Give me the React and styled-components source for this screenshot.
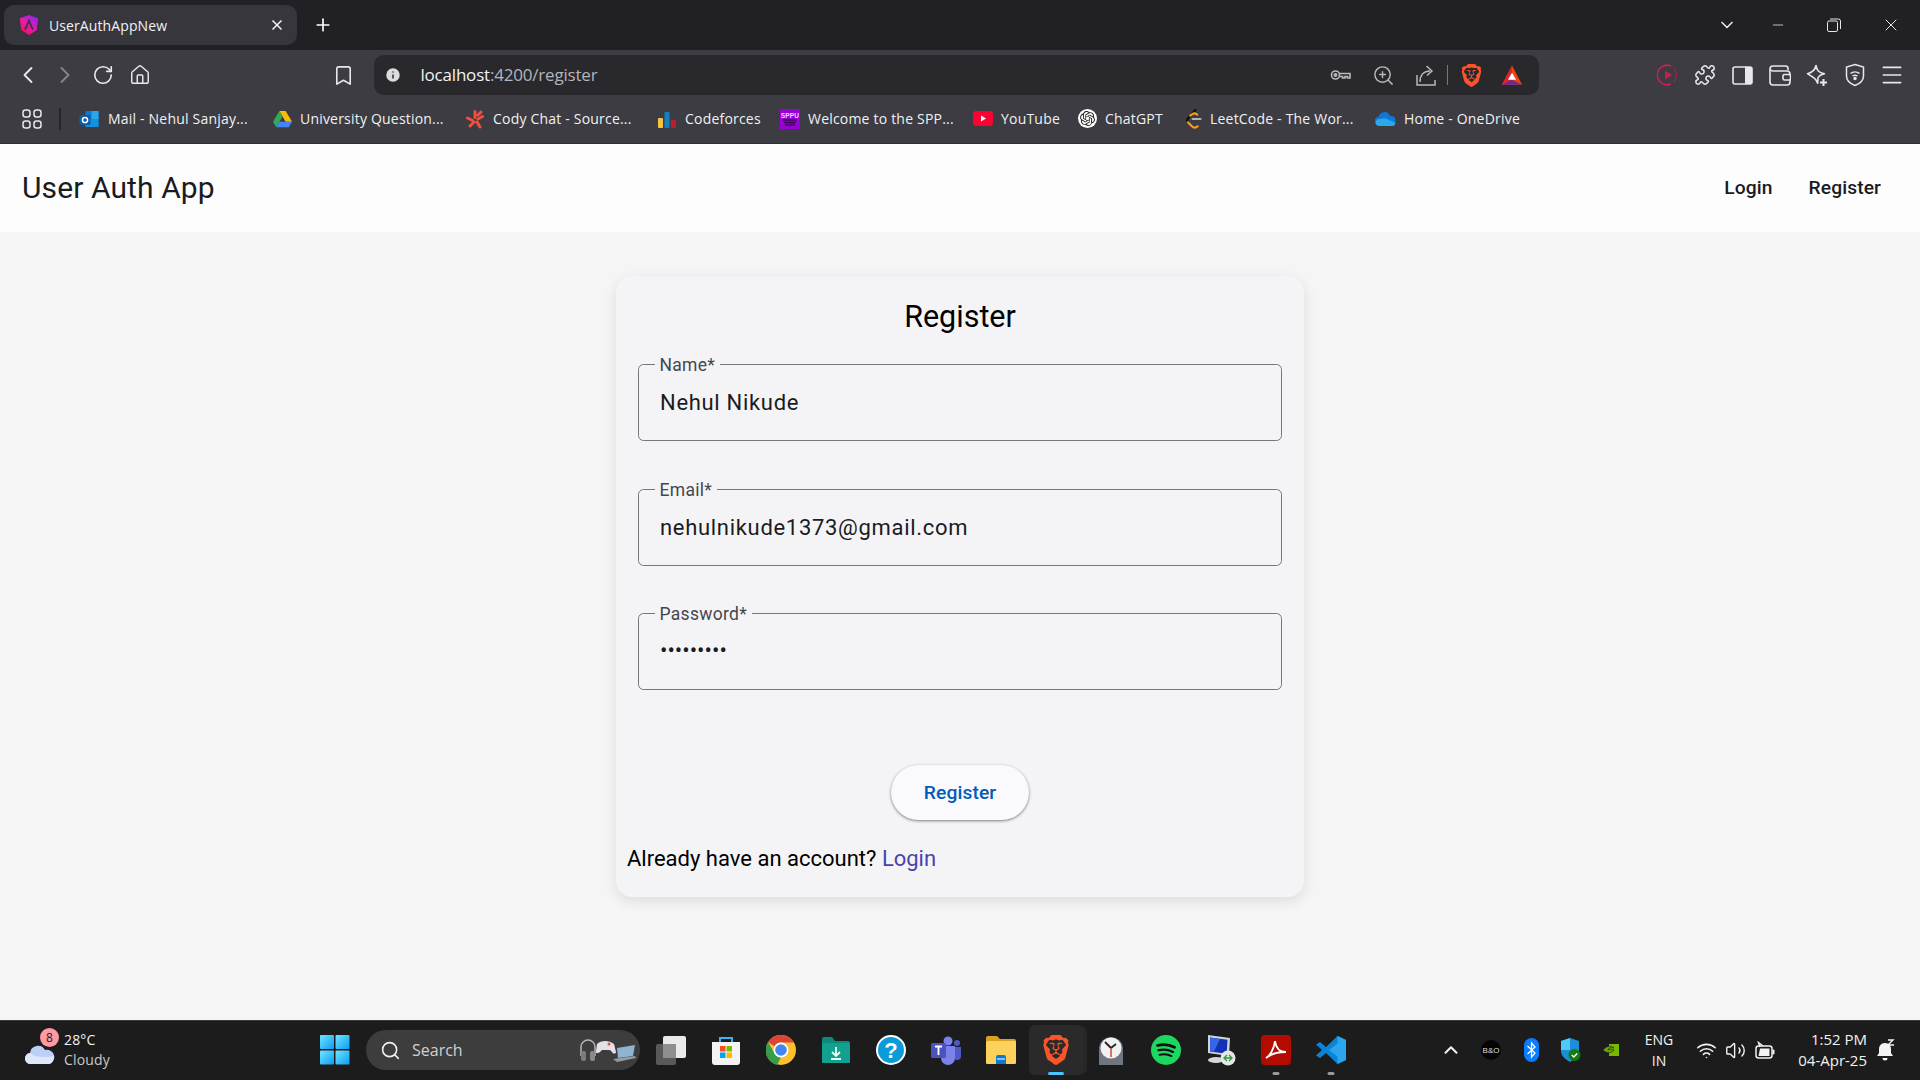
import React from "react";
import styled, { createGlobalStyle } from "styled-components";
import {
  ChevronLeft, ChevronRight, ChevronDown, ChevronUp, RotateCw, House, Bookmark, Info,
  ZoomIn, Puzzle, Menu, Wifi, Volume2, Minus, X, Search, Plus,
} from "lucide-react";
import { SiBrave, SiOpenai } from "react-icons/si";

const GlobalStyle = createGlobalStyle`
  html, body { margin: 0; padding: 0; height: 100%; background: #f5f5f5; }
  * { box-sizing: border-box; }
  body { font-family: Roboto, "Liberation Sans", sans-serif; overflow: hidden; }
`;

const Screen = styled.div`
  width: 1920px;
  height: 1080px;
  display: flex;
  flex-direction: column;
  overflow: hidden;
`;

/* browser chrome */
const TabStrip = styled.div`
  height: 50px;
  background: #202025;
  display: flex;
  align-items: center;
  padding-left: 4px;
  color: #fff;
  font-family: "Open Sans", sans-serif;
`;
const Tab = styled.div`
  width: 293px;
  height: 40px;
  background: #36363c;
  border-radius: 10px;
  display: flex;
  align-items: center;
  padding: 0 12px 0 14px;
  gap: 9px;
  font-size: 14px;
  letter-spacing: 0.1px;
  color: #f1f1f3;
`;
const TabTitle = styled.span`
  flex: 1;
`;
const NewTab = styled.div`
  margin-left: 16px;
  display: flex;
`;
const WindowControls = styled.div`
  margin-left: auto;
  display: flex;
  align-items: center;
`;
const WinBtn = styled.div`
  width: ${(p) => p.$w || 56}px;
  display: flex;
  justify-content: center;
  color: #e6e6e8;
`;
const Toolbar = styled.div`
  height: 45px;
  background: #3c3c42;
  display: flex;
  align-items: flex-start;
  padding: 5px 0 0 9px;
  color: #e8e8ea;
`;
const ToolBtn = styled.div`
  width: ${(p) => p.$w || 37.5}px;
  height: 40px;
  flex: none;
  display: flex;
  align-items: center;
  justify-content: center;
  margin-left: ${(p) => p.$ml || 0}px;
  color: ${(p) => p.$color || "#e8e8ea"};
`;
const UrlBar = styled.div`
  width: 1165px;
  height: 40px;
  margin-left: 11px;
  background: #28282d;
  border-radius: 10px;
  display: flex;
  align-items: center;
  flex: none;
  padding-left: 10px;
`;
const UrlText = styled.span`
  margin: -2px 0 0 19px;
  font-family: "Open Sans", sans-serif;
  font-size: 17px;
  letter-spacing: -0.2px;
  color: #b5b5ba;
  b { font-weight: 400; color: #f2f2f4; }
`;
const UrlActions = styled.div`
  margin-left: auto;
  display: flex;
  align-items: center;
  padding-right: 10px;
`;
const UrlAction = styled.div`
  width: ${(p) => p.$w || 43}px;
  display: flex;
  justify-content: center;
  color: #b9b9bd;
`;
const UrlDivider = styled.div`
  width: 1px;
  height: 20px;
  background: #77777c;
`;
const BookmarksBar = styled.div`
  height: 49px;
  background: #3c3c42;
  display: flex;
  align-items: center;
  padding: 0 0 1px 22px;
  border-bottom: 1px solid #303035;
  font-family: "Open Sans", sans-serif;
  color: #f1f1f3;
`;
const BarDivider = styled.div`
  width: 2px;
  height: 22px;
  background: #26262a;
  margin: 0 18px 0 17px;
`;
const BookmarkItem = styled.div`
  width: ${(p) => p.$w}px;
  flex: none;
  display: flex;
  align-items: center;
  gap: 8px;
  font-size: 14px;
  letter-spacing: 0.2px;
  white-space: nowrap;
  svg { flex: none; }
`;
const GptDisc = styled.span`
  display: flex;
  background: #fff;
  border-radius: 50%;
  padding: 2px;
`;

/* app */
const Page = styled.div`
  flex: 1;
  background: #f5f5f5;
  display: flex;
  flex-direction: column;
  align-items: center;
`;
const NavBar = styled.header`
  width: 100%;
  height: 88px;
  background: #fdfdfe;
  display: flex;
  align-items: center;
  padding: 0 22px 2px;
`;
const Brand = styled.div`
  font-size: 30px;
  color: #1a1b1f;
  letter-spacing: 0.1px;
`;
const NavLinks = styled.nav`
  margin-left: auto;
  display: flex;
  gap: 36px;
  padding-right: 17px;
`;
const NavLink = styled.a`
  font-size: 19.25px;
  font-weight: 500;
  letter-spacing: 0.1px;
  color: #1a1b1f;
`;
const Card = styled.main`
  width: 688px;
  margin-top: 44px;
  padding: 19px 22px 23px;
  background: #f4f4f6;
  border-radius: 16px;
  box-shadow: 0 4px 14px rgba(0, 0, 0, 0.1);
`;
const Title = styled.h2`
  margin: 0 0 25px;
  font-size: 30.5px;
  line-height: 44px;
  font-weight: 400;
  text-align: center;
  color: #000;
`;
const Fields = styled.div`
  display: flex;
  flex-direction: column;
  gap: 47.5px;
  margin-bottom: 75px;
`;
const FieldBox = styled.div`
  position: relative;
  height: 77px;
  border: 1.4px solid #74777f;
  border-radius: 5.5px;
  display: flex;
  align-items: center;
  padding: 0 21px;
  font-size: 22px;
  letter-spacing: 0.69px;
  color: #1a1b1f;
`;
const FieldLabel = styled.label`
  position: absolute;
  left: 15.5px;
  top: -10px;
  padding: 0 5px;
  background: #f4f4f6;
  font-size: 17.5px;
  line-height: 20px;
  letter-spacing: 0.3px;
  color: #44474e;
`;
const Dots = styled.span`
  font-size: 22px;
  letter-spacing: 0;
  line-height: 1;
  margin-top: -2px;
`;
const ButtonRow = styled.div`
  display: flex;
  justify-content: center;
`;
const RegisterButton = styled.button`
  width: 138px;
  height: 55px;
  border: none;
  border-radius: 27.5px;
  background: #faf9fd;
  color: #005cbb;
  font-family: inherit;
  font-size: 19.25px;
  font-weight: 500;
  letter-spacing: 0.1px;
  box-shadow: 0 1px 3px 1px rgba(0, 0, 0, 0.15), 0 1px 2px rgba(0, 0, 0, 0.3);
`;
const FooterText = styled.p`
  margin: 24px 0 0 -11px;
  font-size: 22px;
  line-height: 30px;
  color: #000;
  a { color: #4a41b0; }
`;

/* taskbar */
const Taskbar = styled.footer`
  height: 60px;
  flex: none;
  background: #1c1c1c;
  border-top: 1px solid #3a3a3a;
  display: flex;
  align-items: center;
  padding-bottom: 1px;
  color: #f2f2f2;
  font-family: "Open Sans", sans-serif;
`;
const Weather = styled.div`
  width: 320px;
  flex: none;
  display: flex;
  align-items: center;
  gap: 9px;
  padding-left: 25px;
`;
const WeatherIcon = styled.div`
  position: relative;
  width: 30px;
  height: 30px;
  display: flex;
  align-items: flex-end;
`;
const Badge = styled.span`
  position: absolute;
  top: -7px;
  right: -4px;
  width: 19px;
  height: 19px;
  border-radius: 50%;
  background: #ff99a4;
  color: #1c1c1c;
  font-size: 12px;
  line-height: 19px;
  text-align: center;
`;
const WeatherText = styled.div`
  font-size: 14px;
  line-height: 20px;
  letter-spacing: 0.15px;
  span { display: block; color: #c8c8c8; }
`;
const SearchPill = styled.div`
  width: 274px;
  height: 40px;
  margin-left: 16px;
  border-radius: 20px;
  background: #3d3d3d;
  display: flex;
  align-items: center;
  gap: 11px;
  padding-left: 14px;
  font-size: 16px;
  color: #d0d0d0;
  flex: none;
`;
const PillArt = styled.div`
  margin-left: auto;
  margin-right: -1px;
  display: flex;
`;
const TaskIcon = styled.div`
  position: relative;
  width: 55px;
  height: 50px;
  flex: none;
  display: flex;
  align-items: center;
  justify-content: center;
  border-radius: 6px;
  background: ${(p) => (p.$active ? "#2a2a2a" : "transparent")};
  box-shadow: ${(p) => (p.$active ? "4px 0 0 -1px #262626" : "none")};
  &::after {
    content: "";
    display: ${(p) => (p.$dot ? "block" : "none")};
    position: absolute;
    bottom: 0;
    left: 50%;
    transform: translateX(-50%);
    width: ${(p) => (p.$active ? 16 : 7)}px;
    height: 3px;
    border-radius: 2px;
    background: ${(p) => (p.$active ? "#4cc2ff" : "#9a9a9a")};
  }
`;
const TaskIcons = styled.div`
  display: flex;
  margin-left: 3.5px;
`;
const Tray = styled.div`
  display: flex;
  align-items: center;
  margin-left: 72.5px;
`;
const TrayIcon = styled.div`
  width: ${(p) => p.$w || 40}px;
  margin-left: ${(p) => p.$ml || 0}px;
  flex: none;
  display: flex;
  justify-content: center;
`;
const Lang = styled.div`
  width: 50px;
  margin-left: 3px;
  text-align: center;
  font-size: 14px;
  line-height: 21px;
`;
const Clock = styled.div`
  width: 80px;
  margin-left: 5px;
  text-align: right;
  font-size: 15px;
  line-height: 21px;
  white-space: nowrap;
`;

/* drawn logos */
const AngularIcon = () => (
  <svg width="22" height="24" viewBox="0 0 24 24">
    <defs>
      <linearGradient id="ang" x1="0" y1="1" x2="0.8" y2="0">
        <stop offset="0" stopColor="#f00a3c" />
        <stop offset="0.5" stopColor="#ec1aa8" />
        <stop offset="1" stopColor="#8b24f0" />
      </linearGradient>
    </defs>
    <path fill="url(#ang)" d="M9.9 14.6h4.2L12 9.6zM12 1 2 4.5l1.5 13L12 23l8.5-5.5 1.5-13zm3.3 16.2-1-2.1H9.700l-1 2.100H6.600L12 5l5.400 12.200z" />
  </svg>
);
const SideBarIcon = () => (
  <svg width="21" height="21" viewBox="0 0 21 21">
    <rect x="1" y="2" width="19" height="17" rx="2" fill="none" stroke="#e8e8ea" strokeWidth="1.6" />
    <rect x="13" y="2" width="7" height="17" fill="#e8e8ea" />
  </svg>
);
const KeyIcon = () => (
  <svg width="21" height="14" viewBox="0 0 21 14" fill="none" stroke="#b9b9bd" strokeWidth="1.6">
    <circle cx="5.5" cy="7" r="4" />
    <circle cx="5.5" cy="7" r="1.2" fill="#b9b9bd" />
    <path d="M9.5 5.5H20V10h-2.5V8.5H15V10h-2.5V8.5h-3" />
  </svg>
);
const ShareIcon = () => (
  <svg width="20" height="24" viewBox="0 0 20 24" fill="none" stroke="#b9b9bd" strokeWidth="1.5">
    <path d="M1 12v10h18v-5M4 19c0-7 4-11 10-11M10.5 3 16 8l-5 4.5" />
  </svg>
);
const BatIcon = () => (
  <svg width="22" height="23" viewBox="0 0 24 24">
    <path d="M12 1 1 22h22z" fill="#f1440f" />
    <path d="M12 1 1 22h11z" fill="#d8232e" />
    <path d="M1 22l11-5.500L23 22z" fill="#662d91" />
    <path d="m12 9 4.400 7.500H7.600z" fill="#fff" />
  </svg>
);
const PlayCircle = () => (
  <svg width="22" height="22" viewBox="0 0 22 22" fill="none">
    <path d="M14 2A9.800 9.800 0 1 0 14 20" stroke="#d3204f" strokeWidth="1.500" />
    <path d="M17 4.500A9.800 9.800 0 0 1 17 17.500" stroke="#8f2a47" strokeWidth="1.500" />
    <path d="m8 6.500 7.500 4.500L8 15.500z" fill="#c52049" />
  </svg>
);
const WalletIcon = () => (
  <svg width="22" height="21" viewBox="0 0 22 21" fill="none" stroke="#e8e8ea" strokeWidth="1.600">
    <path d="M19 5V3.500A2.500 2.500 0 0 0 16.500 1H4a3 3 0 0 0-3 3v13a3 3 0 0 0 3 3h14a3 3 0 0 0 3-3v-2" />
    <path d="M1.500 4.500C2 6 3 6 4 6h14a3 3 0 0 1 3 3v1" />
    <rect x="14" y="9.500" width="7.500" height="5.500" rx="1.500" />
  </svg>
);
const StarIcon = () => (
  <svg width="23" height="23" viewBox="0 0 23 23" fill="none" stroke="#e8e8ea" strokeWidth="1.600">
    <path d="M10 1.500c.8 5 2.500 7 8.500 8.200-4 .9-5.600 2-6.500 4.300l-.3 5.300c-1-1.700-1-2.500-1.700-3.200C8.900 14 6.500 13 1.500 9.700 6.500 8.500 9 6.500 10 1.500z" strokeLinejoin="round" />
    <path d="M17.500 15v7M14 18.500h7" strokeWidth="2" />
  </svg>
);
const ShieldWifi = () => (
  <svg width="20" height="24" viewBox="0 0 20 24" fill="none" stroke="#e8e8ea" strokeWidth="1.500">
    <path d="M10 1.500 18.500 4v9c0 5-4.500 8-8.500 9.500C6 21 1.500 18 1.500 13V4z" />
    <path d="M5.500 10.500c2.600-2 6.400-2 9 0M7.500 13c1.500-1 3.500-1 5 0" />
    <circle cx="10" cy="15.500" r="1" fill="#e8e8ea" />
  </svg>
);
const AppsGrid = () => (
  <svg width="20" height="20" viewBox="0 0 20 20" fill="none" stroke="#e8e8ea" strokeWidth="1.500">
    <rect x="1" y="1" width="7" height="7" rx="2.500" />
    <rect x="12" y="1" width="7" height="7" rx="2.500" />
    <rect x="1" y="12" width="7" height="7" rx="2.500" />
    <rect x="12" y="12" width="7" height="7" rx="2.500" />
  </svg>
);
const OutlookIcon = () => (
  <svg width="21" height="20" viewBox="0 0 20 20">
    <rect x="6" y="2" width="13" height="16" rx="1" fill="#0f78d4" />
    <rect x="12" y="2" width="7" height="8" fill="#28a8ea" />
    <path d="M6 10h13v8H6z" fill="#1490df" />
    <rect x="0" y="6" width="11" height="10" rx="1" fill="#0a5ea8" />
    <circle cx="5.500" cy="11" r="2.600" fill="none" stroke="#fff" strokeWidth="1.500" />
  </svg>
);
const DriveIcon = () => (
  <svg width="19" height="18" viewBox="0 0 24 22">
    <path d="M8 1h8l8 13.500h-8z" fill="#fbbc04" />
    <path d="M8 1 0 14.500 4 21.500 12 8z" fill="#34a853" />
    <path d="M4 21.500h16l4-7H8z" fill="#4285f4" />
  </svg>
);
const CodyIcon = () => (
  <svg width="20" height="20" viewBox="0 0 20 20" stroke="#f34e3f" strokeWidth="3" strokeLinecap="round">
    <path d="M10 2.500v6M2.500 9l5 2.500M5 17l4-4M12 13l3 5M17.500 7.500 13 10M16 3l-3 3" />
  </svg>
);
const BarsIcon = () => (
  <svg width="20" height="20" viewBox="0 0 20 20">
    <rect x="1" y="9" width="5" height="10" rx="1" fill="#f5c343" />
    <rect x="7.500" y="3" width="5" height="16" rx="1" fill="#1480c4" />
    <rect x="14" y="11" width="5" height="8" rx="1" fill="#b5202a" />
  </svg>
);
const SppuIcon = () => (
  <svg width="20" height="20" viewBox="0 0 20 20">
    <rect width="20" height="20" fill="#9a00d8" />
    <text x="10" y="8.500" textAnchor="middle" fontFamily="Liberation Sans" fontWeight="700" fontSize="6.500" fill="#f3d8ff">SPPU</text>
    <path d="M3 11h14M4 13.500h12M5 16h10" stroke="#3a0054" strokeWidth="1.500" />
  </svg>
);
const YouTubeIcon = () => (
  <svg width="20" height="15" viewBox="0 0 20 15">
    <rect width="20" height="15" rx="3.500" fill="#ff0033" />
    <path d="m8 4.500 5 3-5 3z" fill="#fff" />
  </svg>
);
const LeetCodeIcon = () => (
  <svg width="17" height="22" viewBox="0 0 18 22" fill="none" strokeWidth="2.200" strokeLinecap="round">
    <path d="M11 1.500 3 10.500" stroke="#0d0d0d" />
    <path d="M3 10.500c-1 1.500-1 3 0 4" stroke="#0d0d0d" />
    <path d="M3 14.500l4 4c2 2 4.500 2 6.500.2" stroke="#f89f1b" />
    <path d="M5.500 7.500 7.500 6c2-1.500 4-1 5.500.5" stroke="#f89f1b" />
    <path d="M8 11h8.500" stroke="#b3b3b3" />
  </svg>
);
const OneDriveIcon = () => (
  <svg width="21" height="14" viewBox="0 0 21 14">
    <path d="M4 13a4 4 0 0 1-.5-8A6 6 0 0 1 15 4a4.500 4.500 0 0 1 2 9z" fill="#0f78d4" />
    <path d="M4 14a3.500 3.500 0 0 1-1-6.800l7-1 10.500 4.500A3.500 3.500 0 0 1 17.500 14z" fill="#29a8ea" />
  </svg>
);
const CloudIcon = () => (
  <svg width="30" height="24" viewBox="0 0 30 24">
    <path d="M6 23a5.500 5.500 0 0 1-1-11 8 8 0 0 1 15-3 6.500 6.500 0 0 1 4 14z" fill="#bcd0f5" />
    <path d="M6 23a5.500 5.500 0 0 1-1-11c4 4 14 5 24 3 0 4-2 8-5 8z" fill="#dfe8fb" />
  </svg>
);
const WindowsLogo = () => (
  <svg width="30" height="30" viewBox="0 0 30 30">
    <defs>
      <linearGradient id="winA" x1="0" y1="0" x2="1" y2="1">
        <stop offset="0" stopColor="#6fe6ff" />
        <stop offset="1" stopColor="#0d9cf5" />
      </linearGradient>
    </defs>
    <rect width="14" height="14" rx="1" fill="url(#winA)" />
    <rect x="15.500" width="14" height="14" rx="1" fill="url(#winA)" />
    <rect y="15.500" width="14" height="14" rx="1" fill="url(#winA)" />
    <rect x="15.500" y="15.500" width="14" height="14" rx="1" fill="url(#winA)" />
  </svg>
);
const SearchArt = () => (
  <svg width="66" height="28" viewBox="0 0 60 28">
    <path d="M3 20V11a7 7 0 0 1 14 0v9" fill="none" stroke="#b5b5b5" strokeWidth="1.500" />
    <rect x="3" y="15" width="5" height="10" rx="2" fill="#7c7c7c" />
    <rect x="12" y="15" width="5" height="10" rx="2" fill="#8a8a8a" />
    <path d="M19 8c4-4 12-4 17 0l2 8c0 2-3 2-4 0l-2-2h-8l-2 2c-2 2-5 1-4-1z" fill="#e6dfe6" />
    <circle cx="31" cy="8" r="1.500" fill="#d9534f" />
    <path d="M39 12l18-3-2 11-15 2z" fill="#8eb4cf" />
    <path d="M35 23l22-3 1 2-19 4z" fill="#9a9a9a" />
  </svg>
);
const TaskViewIcon = () => (
  <svg width="30" height="30" viewBox="0 0 30 30">
    <rect x="0" y="9" width="20" height="21" rx="2" fill="#595959" />
    <rect x="7" y="1" width="23" height="22" rx="2" fill="#eaeaea" />
    <rect x="7" y="9" width="13" height="14" fill="#8f8f8f" />
  </svg>
);
const StoreIcon = () => (
  <svg width="30" height="30" viewBox="0 0 30 30">
    <path d="M9 7V3h12v4" fill="none" stroke="#35b5f2" strokeWidth="2" />
    <path d="M1 7h28v20a3 3 0 0 1-3 3H4a3 3 0 0 1-3-3z" fill="#f3f3f3" />
    <rect x="9" y="11" width="5.500" height="5.500" fill="#f25022" />
    <rect x="15.500" y="11" width="5.500" height="5.500" fill="#7fba00" />
    <rect x="9" y="17.500" width="5.500" height="5.500" fill="#00a4ef" />
    <rect x="15.500" y="17.500" width="5.500" height="5.500" fill="#ffb900" />
  </svg>
);
const ChromeIcon = () => (
  <svg width="30" height="30" viewBox="0 0 30 30">
    <circle cx="15" cy="15" r="15" fill="#fbc02d" />
    <path d="M15 0a15 15 0 0 1 13 7.500H15a7.500 7.500 0 0 0-6.500 3.750L2 7A15 15 0 0 1 15 0" fill="#db4437" />
    <path d="M2 7l6.500 11.250A7.500 7.500 0 0 0 15 22.500L11 30A15 15 0 0 1 2 7" fill="#3a9b4b" />
    <circle cx="15" cy="15" r="7.500" fill="#fff" />
    <circle cx="15" cy="15" r="5.800" fill="#4285f4" />
  </svg>
);
const DownloadFolder = () => (
  <svg width="28" height="26" viewBox="0 0 28 26">
    <path d="M0 2a2 2 0 0 1 2-2h8l3 4h13a2 2 0 0 1 2 2v18a2 2 0 0 1-2 2H2a2 2 0 0 1-2-2z" fill="#0e8a7d" />
    <rect y="6" width="28" height="20" rx="1.500" fill="#12a08f" />
    <path d="M14 10v8M10 15l4 4 4-4M9 22h10" stroke="#e8fff9" strokeWidth="1.800" fill="none" />
  </svg>
);
const HelpIcon = () => (
  <svg width="30" height="30" viewBox="0 0 30 30">
    <circle cx="15" cy="15" r="14" fill="#0a9bd8" stroke="#fff" strokeWidth="2" />
    <text x="15" y="23" textAnchor="middle" fontFamily="Liberation Sans" fontWeight="700" fontSize="22" fill="#fff">?</text>
  </svg>
);
const TeamsIcon = () => (
  <svg width="30" height="30" viewBox="0 0 30 30">
    <circle cx="17" cy="6" r="4.500" fill="#7b83eb" />
    <circle cx="26" cy="8" r="3" fill="#5059c9" />
    <path d="M22 12h8v9a4 4 0 0 1-8 0z" fill="#5059c9" />
    <path d="M10 11h14v12a6 6 0 0 1-14 0z" fill="#7b83eb" />
    <rect x="0" y="8" width="15" height="15" rx="1.500" fill="#4b53bc" />
    <path d="M4 11.500h7M7.500 11.500V20" stroke="#fff" strokeWidth="1.800" />
  </svg>
);
const FilesIcon = () => (
  <svg width="30" height="28" viewBox="0 0 30 28">
    <path d="M0 2a2 2 0 0 1 2-2h9l3 3h14a2 2 0 0 1 2 2v21a2 2 0 0 1-2 2H2a2 2 0 0 1-2-2z" fill="#d9a11f" />
    <rect y="5" width="30" height="23" rx="1.500" fill="#fcd25c" />
    <path d="M10 21a2 2 0 0 1 2-2h6a2 2 0 0 1 2 2v7H10z" fill="#0f78d4" />
    <rect x="11" y="22" width="8" height="2" fill="#7fc4f5" />
  </svg>
);
const ClockAppIcon = () => (
  <svg width="30" height="30" viewBox="0 0 30 30">
    <path d="M3 30V14a12 12 0 0 1 24 0v16z" fill="#6e7780" />
    <circle cx="15" cy="13" r="10.500" fill="#f1f1f1" />
    <path d="M15 13 9 7M15 13l5-4" stroke="#222" strokeWidth="1.800" />
    <path d="M15 13v9" stroke="#d14b2b" strokeWidth="1.500" />
  </svg>
);
const SpotifyIcon = () => (
  <svg width="30" height="30" viewBox="0 0 30 30">
    <circle cx="15" cy="15" r="15" fill="#1ed760" />
    <g fill="none" stroke="#111" strokeLinecap="round">
      <path d="M6.500 10.500c5.500-1.500 12-1 17 1.800" strokeWidth="2.800" />
      <path d="M7.500 15.200c5-1.200 10-.7 14.500 1.700" strokeWidth="2.300" />
      <path d="M8.500 19.800c4-1 8.500-.6 12 1.300" strokeWidth="1.900" />
    </g>
  </svg>
);
const RemoteIcon = () => (
  <svg width="30" height="32" viewBox="0 0 30 32">
    <path d="M2 1l22 3-1 18L2 19z" fill="#cfd3da" />
    <path d="M4 3.500l17.500 2.300-.8 14L4 17.500z" fill="#1230b4" />
    <path d="M4 3.500 14 5 8 17.800l-4-.3z" fill="#3a64e8" />
    <ellipse cx="10" cy="26" rx="8" ry="3" fill="#d6d6d6" />
    <circle cx="22" cy="24" r="7.500" fill="#e6e6e6" />
    <path d="M18 24h8M21 21l-3 3 3 3M23 21l3 3-3 3" stroke="#2e9e3f" strokeWidth="1.300" fill="none" />
  </svg>
);
const AcrobatIcon = () => (
  <svg width="30" height="30" viewBox="0 0 30 30">
    <rect width="30" height="30" rx="4" fill="#b30b00" />
    <path d="M5 23c4-2 8-9 9-17 1 8 5 11 11 11-6 0-14 1-20 6z" fill="none" stroke="#fff" strokeWidth="1.800" />
  </svg>
);
const VsCodeIcon = () => (
  <svg width="30" height="30" viewBox="0 0 30 30">
    <path d="M21.500 1 30 5v20l-8.500 4L10 18l-6 5-4-2.500L6 15 0 9.500 4 7l6 5z" fill="#0a84d6" />
    <path d="M21.500 1 30 5v20l-8.500 4zM21.500 8.500 13 15l8.500 6.500z" fill="#2ba5ee" fillRule="evenodd" />
  </svg>
);
const BeoIcon = () => (
  <svg width="20" height="20" viewBox="0 0 20 20">
    <circle cx="10" cy="10" r="10" fill="#050505" />
    <text x="10" y="13" textAnchor="middle" fontFamily="Liberation Sans" fontSize="8" fill="#ddd">B&amp;O</text>
  </svg>
);
const BluetoothIcon = () => (
  <svg width="15" height="24" viewBox="0 0 15 24">
    <rect width="15" height="24" rx="7.500" fill="#0a7cff" />
    <path d="M3.500 8 11 15l-3.500 4V5L11 9l-7.500 7" stroke="#fff" strokeWidth="1.300" fill="none" />
  </svg>
);
const DefenderIcon = () => (
  <svg width="20" height="24" viewBox="0 0 20 24">
    <path d="M9 0 18 3v10c0 5-4 8-9 11-5-3-9-6-9-11V3z" fill="#1d8fd8" />
    <path d="M9 0v12H0V3z" fill="#50c8f5" />
    <circle cx="13.500" cy="17" r="6" fill="#107c10" />
    <path d="m10.800 17 2 2 3.400-3.500" stroke="#fff" strokeWidth="1.400" fill="none" />
  </svg>
);
const NvidiaIcon = () => (
  <svg width="16" height="14" viewBox="0 0 16 14">
    <rect x="6" y="1" width="10" height="12" fill="#76b900" />
    <path d="M0 7c3-4 8-5 11-2-3-1-5 0-6 2 2-1 4-1 6 0-2 3-7 4-11 0z" fill="#6aa600" stroke="#1c1c1c" strokeWidth=".6" />
  </svg>
);
const BatteryIcon = () => (
  <svg width="20" height="19" viewBox="0 0 20 19">
    <rect x="1" y="5" width="16" height="12" rx="2.500" fill="none" stroke="#f2f2f2" strokeWidth="1.500" />
    <path d="M3.500 15l1.500-7.500h9.500V15z" fill="#f2f2f2" />
    <rect x="17.500" y="8.500" width="2" height="5" rx="1" fill="#f2f2f2" />
    <path d="M5 6 3.500 1.500 8 5" fill="none" stroke="#f2f2f2" strokeWidth="1.400" />
  </svg>
);
const BellSnooze = () => (
  <svg width="18" height="22" viewBox="0 0 18 22">
    <path d="M8 4c-4 0-6 3-6 6v4l-2 3h16l-2-3v-4c0-3-2-6-6-6z" fill="#f2f2f2" />
    <path d="M5.500 19a2.500 2.500 0 0 0 5 0z" fill="#f2f2f2" />
    <path d="M11 1h5l-5 5h6" stroke="#f2f2f2" strokeWidth="1.400" fill="none" />
  </svg>
);

const GptIcon = () => (
  <GptDisc>
    <SiOpenai size={15} color="#222" />
  </GptDisc>
);

const bookmarks = [
  { w: 194, icon: <OutlookIcon />, label: "Mail - Nehul Sanjay..." },
  { w: 192, icon: <DriveIcon />, label: "University Question..." },
  { w: 192, icon: <CodyIcon />, label: "Cody Chat - Source..." },
  { w: 123, icon: <BarsIcon />, label: "Codeforces" },
  { w: 193, icon: <SppuIcon />, label: "Welcome to the SPP..." },
  { w: 105, icon: <YouTubeIcon />, label: "YouTube" },
  { w: 107, icon: <GptIcon />, label: "ChatGPT" },
  { w: 190, icon: <LeetCodeIcon />, label: "LeetCode - The Wor..." },
  { w: 160, icon: <OneDriveIcon />, label: "Home - OneDrive" },
];

const taskIcons = [
  { el: <TaskViewIcon /> },
  { el: <StoreIcon /> },
  { el: <ChromeIcon /> },
  { el: <DownloadFolder /> },
  { el: <HelpIcon /> },
  { el: <TeamsIcon /> },
  { el: <FilesIcon /> },
  { el: <SiBrave size={30} color="#fb542b" />, active: true, dot: true },
  { el: <ClockAppIcon /> },
  { el: <SpotifyIcon /> },
  { el: <RemoteIcon /> },
  { el: <AcrobatIcon />, dot: true },
  { el: <VsCodeIcon />, dot: true },
];

const Field = ({ label, children }) => (
  <FieldBox>
    <FieldLabel>{label}</FieldLabel>
    {children}
  </FieldBox>
);

export default function App() {
  return (
    <Screen>
      <GlobalStyle />
      <TabStrip>
        <Tab>
          <AngularIcon />
          <TabTitle>UserAuthAppNew</TabTitle>
          <X size={16} strokeWidth={2.5} />
        </Tab>
        <NewTab><Plus size={20} /></NewTab>
        <WindowControls>
          <WinBtn $w={46}><ChevronDown size={20} strokeWidth={2} /></WinBtn>
          <WinBtn><Minus size={16} strokeWidth={1.2} /></WinBtn>
          <WinBtn>
            <svg width="14" height="14" viewBox="0 0 14 14" fill="none" stroke="#e6e6e8">
              <rect x="0.500" y="3" width="10" height="10.500" rx="1.500" />
              <path d="M3 1h8.500a2 2 0 0 1 2 2v8" />
            </svg>
          </WinBtn>
          <WinBtn $w={58}><X size={20} strokeWidth={1.2} /></WinBtn>
        </WindowControls>
      </TabStrip>

      <Toolbar>
        <ToolBtn><ChevronLeft size={28} strokeWidth={1.6} /></ToolBtn>
        <ToolBtn $color="#85858a"><ChevronRight size={28} strokeWidth={1.6} /></ToolBtn>
        <ToolBtn><RotateCw size={22} strokeWidth={1.8} /></ToolBtn>
        <ToolBtn><House size={22} strokeWidth={1.6} /></ToolBtn>
        <ToolBtn $ml={166}><Bookmark size={23} strokeWidth={1.7} /></ToolBtn>
        <UrlBar>
          <Info size={18} fill="#dcdcde" color="#28282d" strokeWidth={2} />
          <UrlText><b>localhost</b>:4200/register</UrlText>
          <UrlActions>
            <UrlAction><KeyIcon /></UrlAction>
            <UrlAction><ZoomIn size={23} strokeWidth={1.5} /></UrlAction>
            <UrlAction $w={42}><ShareIcon /></UrlAction>
            <UrlDivider />
            <UrlAction $w={48}><SiBrave size={23} color="#fb542b" /></UrlAction>
            <UrlAction $w={33}><BatIcon /></UrlAction>
          </UrlActions>
        </UrlBar>
        <ToolBtn $ml={112} $w={35.5}><PlayCircle /></ToolBtn>
        <ToolBtn><Puzzle size={22} strokeWidth={1.7} /></ToolBtn>
        <ToolBtn><SideBarIcon /></ToolBtn>
        <ToolBtn><WalletIcon /></ToolBtn>
        <ToolBtn><StarIcon /></ToolBtn>
        <ToolBtn><ShieldWifi /></ToolBtn>
        <ToolBtn><Menu size={26} strokeWidth={1.5} /></ToolBtn>
      </Toolbar>

      <BookmarksBar>
        <AppsGrid />
        <BarDivider />
        {bookmarks.map((b) => (
          <BookmarkItem key={b.label} $w={b.w}>
            {b.icon}
            <span>{b.label}</span>
          </BookmarkItem>
        ))}
      </BookmarksBar>

      <Page>
        <NavBar>
          <Brand>User Auth App</Brand>
          <NavLinks>
            <NavLink>Login</NavLink>
            <NavLink>Register</NavLink>
          </NavLinks>
        </NavBar>
        <Card>
          <Title>Register</Title>
          <Fields>
            <Field label="Name*">Nehul Nikude</Field>
            <Field label="Email*">nehulnikude1373@gmail.com</Field>
            <Field label="Password*"><Dots>•••••••••</Dots></Field>
          </Fields>
          <ButtonRow>
            <RegisterButton>Register</RegisterButton>
          </ButtonRow>
          <FooterText>
            Already have an account? <a>Login</a>
          </FooterText>
        </Card>
      </Page>

      <Taskbar>
        <Weather>
          <WeatherIcon>
            <CloudIcon />
            <Badge>8</Badge>
          </WeatherIcon>
          <WeatherText>
            28°C
            <span>Cloudy</span>
          </WeatherText>
        </Weather>
        <WindowsLogo />
        <SearchPill>
          <Search size={21} strokeWidth={1.8} color="#f0f0f0" />
          Search
          <PillArt><SearchArt /></PillArt>
        </SearchPill>
        <TaskIcons>
          {taskIcons.map((t, i) => (
            <TaskIcon key={i} $active={t.active} $dot={t.dot}>{t.el}</TaskIcon>
          ))}
        </TaskIcons>
        <Tray>
          <TrayIcon><ChevronUp size={22} strokeWidth={2.2} /></TrayIcon>
          <TrayIcon><BeoIcon /></TrayIcon>
          <TrayIcon><BluetoothIcon /></TrayIcon>
          <TrayIcon><DefenderIcon /></TrayIcon>
          <TrayIcon><NvidiaIcon /></TrayIcon>
          <Lang>ENG<br />IN</Lang>
          <TrayIcon $w={32} $ml={6}><Wifi size={21} strokeWidth={1.8} /></TrayIcon>
          <TrayIcon $w={26}><Volume2 size={21} strokeWidth={1.6} /></TrayIcon>
          <TrayIcon $w={34}><BatteryIcon /></TrayIcon>
          <Clock>1:52 PM<br />04-Apr-25</Clock>
          <TrayIcon $w={38}><BellSnooze /></TrayIcon>
        </Tray>
      </Taskbar>
    </Screen>
  );
}
